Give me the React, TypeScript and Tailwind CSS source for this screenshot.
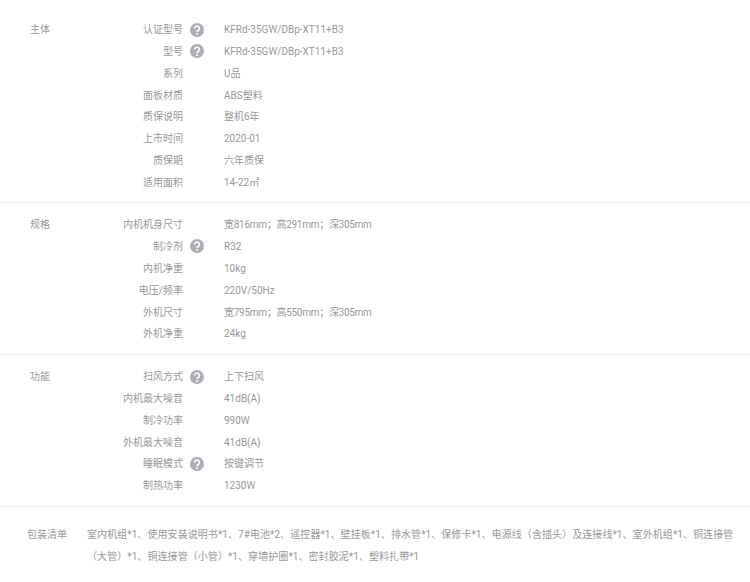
const F = '[font-family:Roboto,"Noto_Sans_CJK_SC",sans-serif]';
type Row = [string, string, boolean?];
const sections: { title: string; rows: Row[]; cls: string }[] = [
  {
    title: "主体",
    cls: "pt-[18.6px] pb-[8.4px]",
    rows: [
      ["认证型号", "KFRd-35GW/DBp-XT11+B3", true],
      ["型号", "KFRd-35GW/DBp-XT11+B3", true],
      ["系列", "U品"],
      ["面板材质", "ABS塑料"],
      ["质保说明", "整机6年"],
      ["上市时间", "2020-01"],
      ["质保期", "六年质保"],
      ["适用面积", "14-22㎡"],
    ],
  },
  {
    title: "规格",
    cls: "pt-[10.8px] pb-[9.2px]",
    rows: [
      ["内机机身尺寸", "宽816mm；高291mm；深305mm"],
      ["制冷剂", "R32", true],
      ["内机净重", "10kg"],
      ["电压/频率", "220V/50Hz"],
      ["外机尺寸", "宽795mm；高550mm；深305mm"],
      ["外机净重", "24kg"],
    ],
  },
  {
    title: "功能",
    cls: "pt-[10.6px] pb-[9.4px]",
    rows: [
      ["扫风方式", "上下扫风", true],
      ["内机最大噪音", "41dB(A)"],
      ["制冷功率", "990W"],
      ["外机最大噪音", "41dB(A)"],
      ["睡眠模式", "按键调节", true],
      ["制热功率", "1230W"],
    ],
  },
];

function Help() {
  return (
    <svg width="14" height="14" viewBox="0 0 14 14" className="block">
      <circle cx="7" cy="7" r="7" fill="#aeaeb6" />
      <path d="M4.6 5.5a2.4 2.4 0 1 1 3.7 2c-.9.5-1.3.9-1.3 1.6" fill="none" stroke="#fff" strokeWidth="1.6" />
      <circle cx="7" cy="11" r="1" fill="#fff" />
    </svg>
  );
}

export default function App() {
  return (
    <div className={`w-[750px] h-[582px] overflow-hidden bg-white text-[10px] text-[#999] ${F}`}>
      {sections.map((s) => (
        <div key={s.title} className={`flex border-b border-[#ececec] ${s.cls}`}>
          <div className="w-[100px] pl-[30px] leading-[21.86px]">{s.title}</div>
          <div className="flex-1">
            {s.rows.map(([k, v, help], i) => (
              <div key={i} className="flex h-[21.86px] items-center">
                <div className="w-[83px] text-right">{k}</div>
                <div className="w-[41px] pl-[7px]">{help && <Help />}</div>
                <div className={v.includes("mm") ? "tracking-[-0.28px]" : ""}>{v}</div>
              </div>
            ))}
          </div>
        </div>
      ))}
      <div className="flex pt-[17px]">
        <div className="w-[87px] pl-[27px] leading-[22px]">包装清单</div>
        <div className="w-[652px] leading-[22px] tracking-[0.07px]">
          室内机组*1、使用安装说明书*1、7#电池*2、遥控器*1、壁挂板*1、排水管*1、保修卡*1、电源线（含插头）及连接线*1、室外机组*1、铜连接管（大管）*1、铜连接管（小管）*1、穿墙护圈*1、密封胶泥*1、塑料扎带*1
        </div>
      </div>
    </div>
  );
}
